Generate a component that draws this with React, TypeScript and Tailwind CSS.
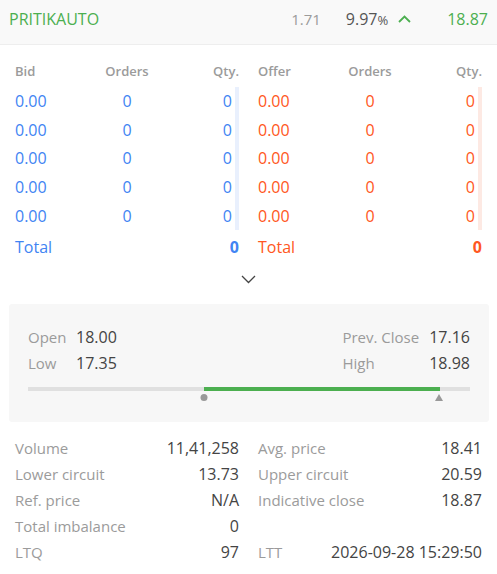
import React from "react";

const bids = [0, 0, 0, 0, 0].map(() => ({ price: "0.00", orders: 0, qty: 0 }));
const offers = [0, 0, 0, 0, 0].map(() => ({ price: "0.00", orders: 0, qty: 0 }));

const leftStats = [
  ["Volume", "11,41,258"],
  ["Lower circuit", "13.73"],
  ["Ref. price", "N/A"],
  ["Total imbalance", "0"],
  ["LTQ", "97"],
];

const rightStats = [
  ["Avg. price", "18.41"],
  ["Upper circuit", "20.59"],
  ["Indicative close", "18.87"],
  ["", ""],
  ["LTT", "2026-09-28 15:29:50"],
];

type Row = { price: string; orders: number; qty: number };

function DepthSide({ title, rows, side }: { title: string; rows: Row[]; side: "buy" | "sell" }) {
  const color = side === "buy" ? "text-[#4184f3]" : "text-[#ff5722]";
  const bar = side === "buy" ? "bg-[#e9f0fd]" : "bg-[#fde9e3]";
  return (
    <div>
      <div className="grid grid-cols-3 h-[30px] items-center text-[13px] font-semibold text-[#9b9b9b]">
        <span>{title}</span>
        <span className="text-center">Orders</span>
        <span className="text-right">Qty.</span>
      </div>
      {rows.map((r, i) => (
        <div key={i} className={`grid grid-cols-3 h-[28.6px] items-center text-[16px] ${color}`}>
          <span>{r.price}</span>
          <span className="text-center">{r.orders}</span>
          <span className="relative h-full flex items-center justify-end pr-[7px]">
            {r.qty}
            <span className={`absolute right-0 top-0 bottom-0 w-[4px] ${bar}`} />
          </span>
        </div>
      ))}
      <div className={`flex h-[35px] items-center justify-between text-[16px] ${color}`}>
        <span>Total</span>
        <span className="font-bold">0</span>
      </div>
    </div>
  );
}

function StatColumn({ items }: { items: string[][] }) {
  return (
    <div>
      {items.map(([label, value], i) => (
        <div key={i} className="flex h-[26px] items-center justify-between">
          <span className="text-[15px] text-[#9b9b9b]">{label}</span>
          <span className="text-[16px] text-[#444444]">{value}</span>
        </div>
      ))}
    </div>
  );
}

export default function App() {
  return (
    <div className="w-[497px] h-[574px] bg-white overflow-hidden font-['Open_Sans',sans-serif]">
      {/* instrument header */}
      <div className="h-[45px] bg-[#f9f9f9] border-b border-[#eeeeee] flex items-start pt-[7px] px-[9px]">
        <span className="text-[16px] leading-[24px] text-[#4caf50]">PRITIKAUTO</span>
        <span className="ml-auto text-[15px] leading-[24px] text-[#9b9b9b]">1.71</span>
        <span className="ml-[25px] text-[16px] leading-[24px] text-[#555555]">
          9.97<span className="text-[13px]">%</span>
        </span>
        <svg className="ml-[10px] mt-[8px]" width="13" height="8" viewBox="0 0 13 8" fill="none">
          <path d="M1 7L6.5 1.5L12 7" stroke="#4caf50" strokeWidth="1.8" />
        </svg>
        <span className="ml-[36px] text-[16px] leading-[24px] text-[#4caf50]">18.87</span>
      </div>

      {/* market depth */}
      <div className="grid grid-cols-2 gap-x-[19px] px-[15px] pt-[12px]">
        <DepthSide title="Bid" rows={bids} side="buy" />
        <DepthSide title="Offer" rows={offers} side="sell" />
      </div>

      <div className="flex justify-center pt-[10px] h-[39px]">
        <svg width="15" height="9" viewBox="0 0 15 9" fill="none">
          <path d="M1 1L7.5 7.5L14 1" stroke="#444444" strokeWidth="1.3" />
        </svg>
      </div>

      {/* day range */}
      <div className="mx-[9px] w-[480px] h-[118px] bg-[#f7f7f7] rounded-[3px] px-[19px] pt-[20px]">
        <div className="flex justify-between">
          <div className="grid grid-cols-[48px_auto]">
            <span className="h-[26px] flex items-center text-[15px] text-[#9b9b9b]">Open</span>
            <span className="h-[26px] flex items-center text-[16px] text-[#444444]">18.00</span>
            <span className="h-[26px] flex items-center text-[15px] text-[#9b9b9b]">Low</span>
            <span className="h-[26px] flex items-center text-[16px] text-[#444444]">17.35</span>
          </div>
          <div className="grid grid-cols-[auto_auto] gap-x-[10px]">
            <span className="h-[26px] flex items-center text-[15px] text-[#9b9b9b]">Prev. Close</span>
            <span className="h-[26px] flex items-center justify-end text-[16px] text-[#444444]">17.16</span>
            <span className="h-[26px] flex items-center text-[15px] text-[#9b9b9b]">High</span>
            <span className="h-[26px] flex items-center justify-end text-[16px] text-[#444444]">18.98</span>
          </div>
        </div>
        <div className="relative mt-[11px] h-[4px] bg-[#e0e0e0]">
          <div className="absolute top-0 h-[4px] left-[39.8%] w-[53.4%] bg-[#4caf50]" />
          <div className="absolute top-[7px] left-[39.75%] -translate-x-1/2 w-[7px] h-[7px] rounded-full bg-[#999999]" />
          <div className="absolute top-[7px] left-[93.05%] -translate-x-1/2 w-0 h-0 border-l-[4.5px] border-r-[4.5px] border-b-[7px] border-l-transparent border-r-transparent border-b-[#999999]" />
        </div>
      </div>

      {/* quote stats */}
      <div className="grid grid-cols-2 gap-x-[19px] px-[15px] pt-[13px]">
        <StatColumn items={leftStats} />
        <StatColumn items={rightStats} />
      </div>
    </div>
  );
}
